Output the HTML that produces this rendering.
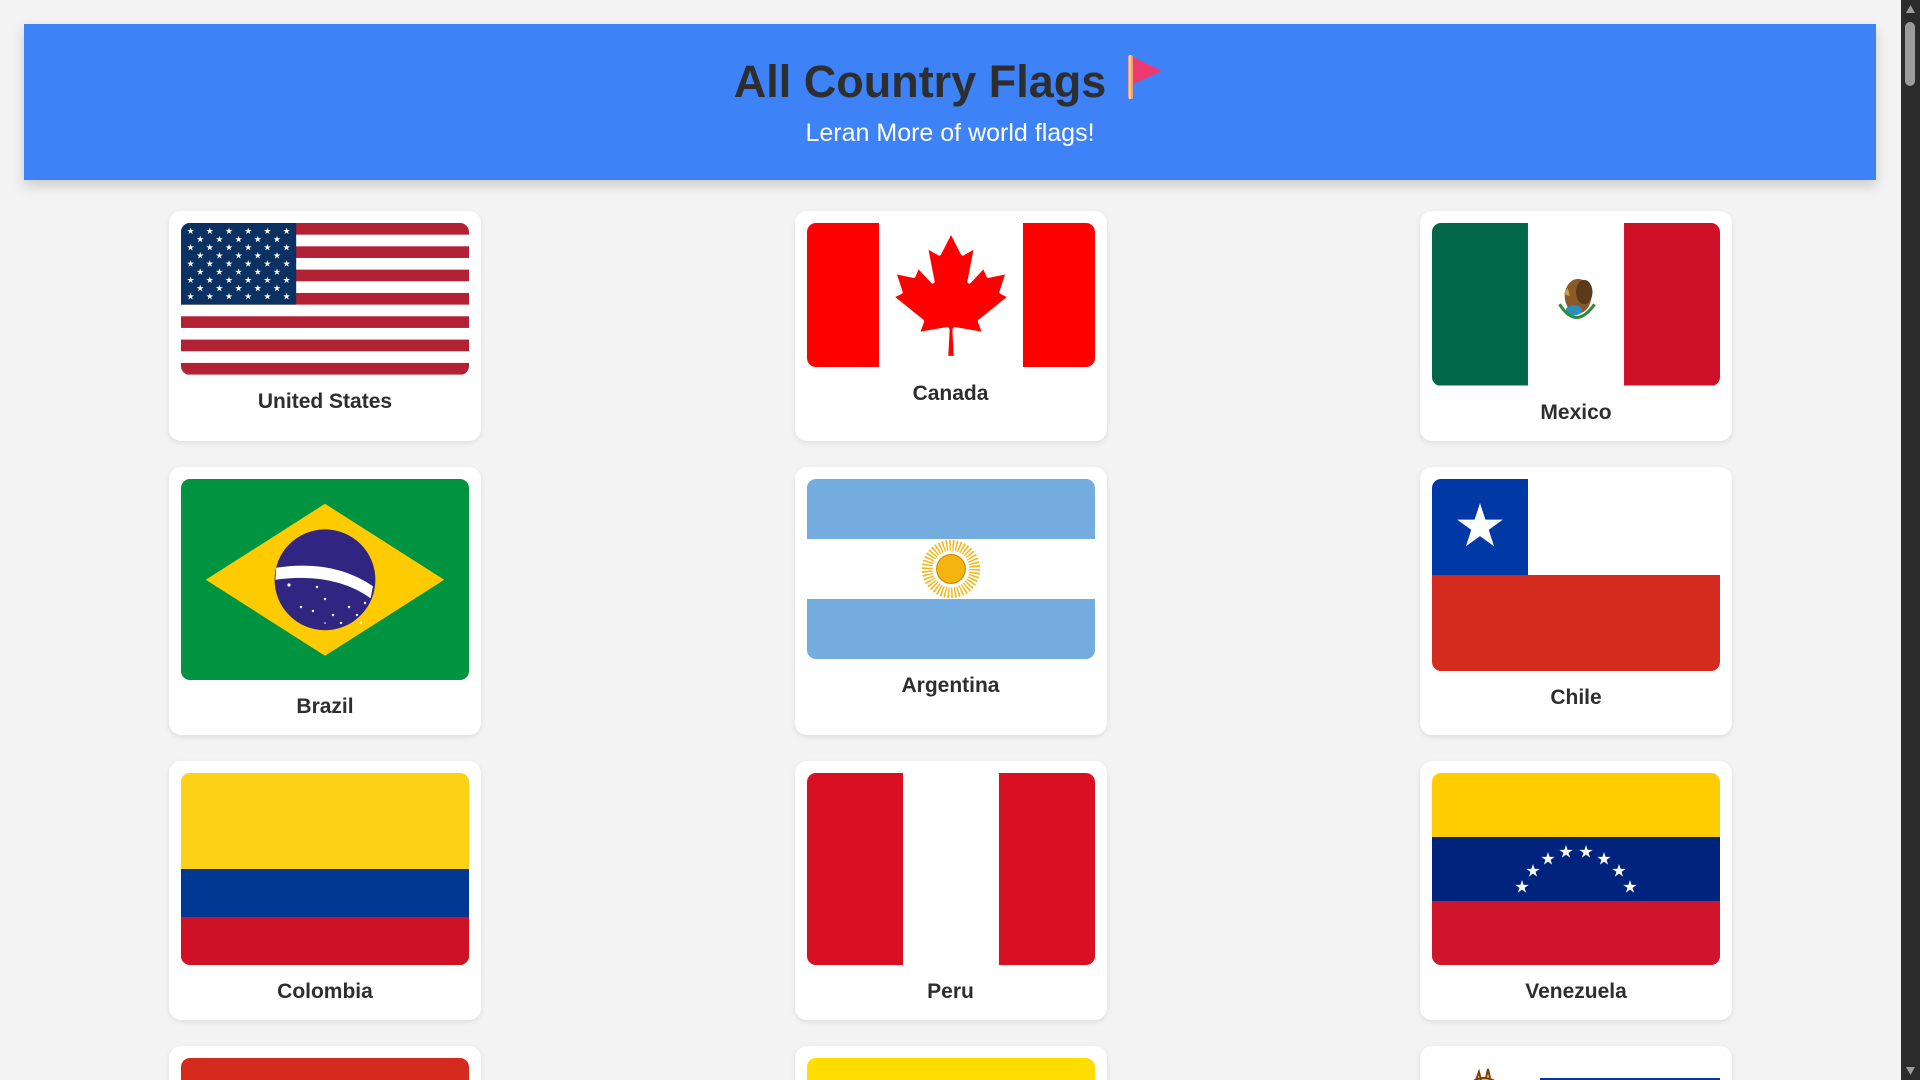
<!DOCTYPE html>
<html><head><meta charset="utf-8"><style>
*{box-sizing:border-box}
html,body{margin:0;padding:0;overflow:hidden;width:1920px;height:1080px;background:#f3f3f3;font-family:"Liberation Sans",Arial,sans-serif}
#wrap{position:relative;width:1920px;height:1080px;overflow:hidden}
header{position:absolute;left:24px;top:24px;width:1852px;height:156px;background:#3d83f7;box-shadow:0 6px 12px rgba(0,0,0,0.16);text-align:center}
h1{margin:0;position:absolute;left:0;right:0;top:32px;font-size:45px;line-height:52px;color:#2e2e2e;font-weight:bold}
h1 svg{vertical-align:top;margin-left:22px;margin-top:-3px}
header p{margin:0;position:absolute;left:0;right:0;top:94px;font-size:25px;line-height:30px;color:#fff}
.grid{position:absolute;left:169px;top:211px;display:grid;grid-template-columns:repeat(3,312px);column-gap:313.5px;row-gap:26px}
.card{background:#fff;border-radius:12px;padding:12px 12px 12px;box-shadow:0 2px 6px rgba(0,0,0,0.09);text-align:center}
.flag{width:288px;border-radius:9px;overflow:hidden;display:block;line-height:0}
.flag svg{display:block;width:288px}
.name{margin:15px 0 4px;font-size:21px;line-height:24px;font-weight:bold;color:#2e2e2e}
.sb{position:absolute;right:0;top:0;width:19px;height:1080px;background:#2b2b2b}
.thumb{position:absolute;left:4px;top:22px;width:10px;height:64px;background:#9c9c9c;border-radius:5px}
</style></head><body><div id="wrap">
<svg width="0" height="0" style="position:absolute"><defs><polygon id="st" fill="#fff" points="0,-1 0.2245,-0.309 0.951,-0.309 0.363,0.118 0.588,0.809 0,0.382 -0.588,0.809 -0.363,0.118 -0.951,-0.309 -0.2245,-0.309"/></defs></svg>
<header>
<h1>All Country Flags<svg width="38" height="46" viewBox="0 0 38 46"><rect x="0" y="2" width="5" height="44" rx="2" fill="#f0a070"/><rect x="1" y="2" width="2" height="44" fill="#ffc8a0"/><polygon points="5,4 34,18 5,31" fill="#ef3a6f"/></svg></h1>
<p>Leran More of world flags!</p>
</header>
<div class="grid">
<div class="card"><div class="flag"><svg viewBox="0 0 190 100" height="151.6" preserveAspectRatio="none">
<rect width="190" height="100" fill="#fff"/>
<g fill="#b22234"><rect y="0" width="190" height="7.69"/><rect y="15.38" width="190" height="7.69"/><rect y="30.77" width="190" height="7.69"/><rect y="46.15" width="190" height="7.69"/><rect y="61.54" width="190" height="7.69"/><rect y="76.92" width="190" height="7.69"/><rect y="92.31" width="190" height="7.69"/></g>
<rect width="76" height="53.85" fill="#0a3161"/>
<g id="r6"><use href="#st" transform="translate(6.33,5.38) scale(2.4)"/><use href="#st" transform="translate(19,5.38) scale(2.4)"/><use href="#st" transform="translate(31.67,5.38) scale(2.4)"/><use href="#st" transform="translate(44.33,5.38) scale(2.4)"/><use href="#st" transform="translate(57,5.38) scale(2.4)"/><use href="#st" transform="translate(69.67,5.38) scale(2.4)"/></g>
<g id="r5"><use href="#st" transform="translate(12.67,10.77) scale(2.4)"/><use href="#st" transform="translate(25.33,10.77) scale(2.4)"/><use href="#st" transform="translate(38,10.77) scale(2.4)"/><use href="#st" transform="translate(50.67,10.77) scale(2.4)"/><use href="#st" transform="translate(63.33,10.77) scale(2.4)"/></g>
<use href="#r6" y="10.77"/><use href="#r5" y="10.77"/><use href="#r6" y="21.54"/><use href="#r5" y="21.54"/><use href="#r6" y="32.31"/><use href="#r5" y="32.31"/><use href="#r6" y="43.08"/>
</svg></div><div class="name">United States</div></div>

<div class="card"><div class="flag"><svg viewBox="0 0 9600 4800" height="144">
<rect width="9600" height="4800" fill="#fff"/><rect width="2400" height="4800" fill="#f00"/><rect x="7200" width="2400" height="4800" fill="#f00"/>
<path fill="#f00" d="M4890 4430l-45-863a95 95 0 0 1 111-98l859 151-116-320a65 65 0 0 1 20-73l941-762-212-99a65 65 0 0 1-34-79l186-572-542 115a65 65 0 0 1-73-38l-105-247-423 454a65 65 0 0 1-111-57l204-1052-327 189a65 65 0 0 1-91-27l-332-652-332 652a65 65 0 0 1-91 27l-327-189 204 1052a65 65 0 0 1-111 57l-423-454-105 247a65 65 0 0 1-73 38l-542-115 186 572a65 65 0 0 1-34 79l-212 99 941 762a65 65 0 0 1 20 73l-116 320 859-151a95 95 0 0 1 111 98l-45 863z"/>
</svg></div><div class="name">Canada</div></div>

<div class="card"><div class="flag"><svg viewBox="0 0 280 160" height="162.5" preserveAspectRatio="none">
<rect width="280" height="160" fill="#fff"/><rect width="93.3" height="160" fill="#006847"/><rect x="186.7" width="93.3" height="160" fill="#ce1126"/>
<ellipse cx="142" cy="72" rx="13" ry="17" fill="#8a5a2b"/><ellipse cx="148" cy="68" rx="8" ry="12" fill="#5a3a1a"/><ellipse cx="138" cy="86" rx="8" ry="5" fill="#2a8fbf"/>
<path d="M124 80 Q140 106 158 80" stroke="#2e8b3a" stroke-width="3" fill="none"/><path d="M128 70 l4 -6 l2 8z" fill="#c8a040"/>
</svg></div><div class="name">Mexico</div></div>

<div class="card"><div class="flag"><svg viewBox="0 0 720 504" height="201.6">
<rect width="720" height="504" fill="#009440"/><polygon points="62,252 360,62 658,252 360,442" fill="#fecb00"/>
<circle cx="360" cy="252" r="126" fill="#302681"/>
<path d="M238 222 Q380 200 480 268 L474 298 Q380 232 236 252 Z" fill="#fff"/>
<g fill="#fff"><circle cx="270" cy="265" r="4"/><circle cx="300" cy="320" r="3"/><circle cx="330" cy="330" r="3"/><circle cx="360" cy="300" r="3"/><circle cx="380" cy="340" r="3"/><circle cx="420" cy="320" r="3"/><circle cx="440" cy="340" r="3"/><circle cx="460" cy="310" r="3"/><circle cx="340" cy="270" r="3"/><circle cx="360" cy="360" r="2"/><circle cx="400" cy="360" r="3"/><circle cx="450" cy="360" r="3"/></g>
</svg></div><div class="name">Brazil</div></div>

<div class="card"><div class="flag"><svg viewBox="0 0 800 500" height="180">
<rect width="800" height="500" fill="#74acdf"/><rect y="166.7" width="800" height="166.7" fill="#fff"/>
<circle cx="400" cy="250" r="66" fill="none" stroke="#f6b40e" stroke-width="30" stroke-dasharray="4 5"/><circle cx="400" cy="250" r="40" fill="#f6b40e" stroke="#c98a00" stroke-width="3"/>
</svg></div><div class="name">Argentina</div></div>

<div class="card"><div class="flag"><svg viewBox="0 0 1500 1000" height="192">
<rect width="1500" height="1000" fill="#fff"/><rect y="500" width="1500" height="500" fill="#d52b1e"/><rect width="500" height="500" fill="#0039a6"/>
<use href="#st" transform="translate(250,250) scale(125)"/>
</svg></div><div class="name">Chile</div></div>

<div class="card"><div class="flag"><svg viewBox="0 0 900 600" height="192">
<rect width="900" height="600" fill="#fcd116"/><rect y="300" width="900" height="150" fill="#003893"/><rect y="450" width="900" height="150" fill="#ce1126"/>
</svg></div><div class="name">Colombia</div></div>

<div class="card"><div class="flag"><svg viewBox="0 0 900 600" height="192">
<rect width="900" height="600" fill="#fff"/><rect width="300" height="600" fill="#d91023"/><rect x="600" width="300" height="600" fill="#d91023"/>
</svg></div><div class="name">Peru</div></div>

<div class="card"><div class="flag"><svg viewBox="0 0 288 192" height="192">
<rect width="288" height="64" fill="#ffcc00"/><rect y="64" width="288" height="64" fill="#00247d"/><rect y="128" width="288" height="64" fill="#cf142b"/>
<use href="#st" transform="translate(90,114) scale(7)"/><use href="#st" transform="translate(101,98) scale(7)"/><use href="#st" transform="translate(116,86) scale(7)"/><use href="#st" transform="translate(134,79) scale(7)"/><use href="#st" transform="translate(154,79) scale(7)"/><use href="#st" transform="translate(172,86) scale(7)"/><use href="#st" transform="translate(187,98) scale(7)"/><use href="#st" transform="translate(198,114) scale(7)"/>
</svg></div><div class="name">Venezuela</div></div>

<div class="card"><div class="flag"><svg viewBox="0 0 288 192" height="192"><rect width="288" height="64" fill="#d52b1e"/><rect y="64" width="288" height="64" fill="#f9e300"/><rect y="128" width="288" height="64" fill="#007934"/></svg></div><div class="name">Bolivia</div></div>
<div class="card"><div class="flag"><svg viewBox="0 0 288 192" height="192"><rect width="288" height="96" fill="#ffdd00"/><rect y="96" width="288" height="48" fill="#034ea2"/><rect y="144" width="288" height="48" fill="#ed1c24"/></svg></div><div class="name">Ecuador</div></div>
<div class="card"><div class="flag"><svg viewBox="0 0 288 192" height="192"><rect width="288" height="192" fill="#fff"/><g fill="#0038a8"><rect x="108" y="20" width="180" height="3"/><rect x="108" y="42" width="180" height="21"/><rect x="108" y="85" width="180" height="21"/><rect x="0" y="128" width="288" height="21"/><rect x="0" y="171" width="288" height="21"/></g><circle cx="52" cy="40" r="20" fill="#fcd116" stroke="#7b3f00" stroke-width="2"/><path d="M44 22 l3-8 l2 8 M54 20 l2-9 l2 9" stroke="#7b3f00" stroke-width="2" fill="none"/></svg></div><div class="name">Uruguay</div></div>
</div>
<div class="sb"><div class="thumb"></div>
<svg style="position:absolute;left:4px;top:4px" width="11" height="10"><polygon points="5.5,1 10,9 1,9" fill="#9c9c9c"/></svg>
<svg style="position:absolute;left:4px;top:1066px" width="11" height="10"><polygon points="1,1 10,1 5.5,9" fill="#9c9c9c"/></svg>
</div>
</div></body></html>
